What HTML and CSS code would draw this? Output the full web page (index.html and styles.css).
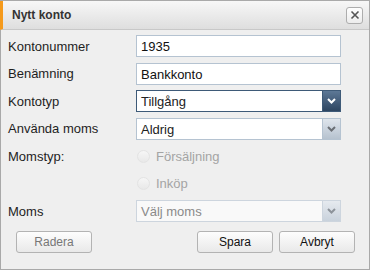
FILE: index.html
```html
<!DOCTYPE html>
<html lang="sv">
<head>
  <meta charset="UTF-8">
  <title>Nytt konto</title>
  <link rel="stylesheet" href="styles.css">
</head>
<body>

  <div class="dialog">
    <div class="header">
      <span class="title">Nytt konto</span>
      <button class="close">
        <svg width="10" height="10" viewBox="0 0 10 10"><path d="M1.5 1.5 L8.5 8.5 M8.5 1.5 L1.5 8.5" stroke="#555" stroke-width="1.6" fill="none"/></svg>
      </button>
    </div>

    <div class="form">
      <label class="label">Kontonummer</label>
      <div class="field"><input class="input" value="1935"></div>

      <label class="label">Benämning</label>
      <div class="field"><input class="input" value="Bankkonto"></div>

      <label class="label">Kontotyp</label>
      <div class="field">
        <div class="select focus">
          <span class="value">Tillgång</span>
          <span class="arrow"><svg width="9" height="6" viewBox="0 0 9 6"><path d="M1 1 L4.5 4.5 L8 1" stroke="#fff" stroke-width="2" fill="none"/></svg></span>
        </div>
      </div>

      <label class="label">Använda moms</label>
      <div class="field">
        <div class="select">
          <span class="value">Aldrig</span>
          <span class="arrow"><svg width="9" height="6" viewBox="0 0 9 6"><path d="M1 1 L4.5 4.5 L8 1" stroke="#6b6f75" stroke-width="2" fill="none"/></svg></span>
        </div>
      </div>

      <label class="label">Momstyp:</label>
      <div class="field radio"><span class="dot"></span>Försäljning</div>

      <span></span>
      <div class="field radio"><span class="dot"></span>Inköp</div>

      <label class="label">Moms</label>
      <div class="field">
        <div class="select disabled">
          <span class="value">Välj moms</span>
          <span class="arrow"><svg width="9" height="6" viewBox="0 0 9 6"><path d="M1 1 L4.5 4.5 L8 1" stroke="#8d939a" stroke-width="2" fill="none"/></svg></span>
        </div>
      </div>
    </div>

    <div class="footer">
      <button class="btn muted">Radera</button>
      <div class="spacer"></div>
      <button class="btn">Spara</button>
      <button class="btn">Avbryt</button>
    </div>
  </div>

</body>
</html>
```

FILE: styles.css
```css
body {
  margin: 0;
  background: #fff;
  font-family: 'Liberation Sans', Arial, sans-serif;
  color: #222;
}

.dialog {
  width: 370px;
  height: 270px;
  box-sizing: border-box;
  border: 1px solid #a9a9a9;
  border-left: none;
  background: #efefef;
  display: flex;
  flex-direction: column;
}

.header {
  height: 29px;
  box-sizing: border-box;
  border-left: 3px solid #f59a1c;
  border-bottom: 1px solid #c8c8c8;
  background: linear-gradient(#f7f7f7, #dedede);
  display: flex;
  align-items: center;
  padding: 0 6px 0 9px;
}

.title {
  flex: 1;
  font-weight: bold;
  font-size: 12px;
  color: #333;
}

.close {
  width: 17px;
  height: 17px;
  padding: 0;
  border: 1px solid #adadad;
  border-radius: 3px;
  background: linear-gradient(#fefefe, #ececec);
  display: flex;
  align-items: center;
  justify-content: center;
}

.form {
  border-left: 1px solid #a9a9a9;
  display: grid;
  grid-template-columns: 128px 205px;
  grid-auto-rows: 22px;
  row-gap: 5.5px;
  padding: 5px 0 0 7px;
  align-items: center;
}

.label {
  font-size: 13px;
  color: #1e1e1e;
}

.field {
  height: 22px;
  display: flex;
  align-items: center;
}

.input {
  width: 100%;
  height: 22px;
  box-sizing: border-box;
  border: 1px solid #b5c3d1;
  background: #fff;
  font-family: inherit;
  font-size: 13px;
  color: #111;
  padding: 1px 4px 0;
  outline: none;
}

.select {
  width: 100%;
  height: 22px;
  box-sizing: border-box;
  border: 1px solid #b5c3d1;
  background: #fff;
  display: flex;
  align-items: center;
}

.select .value {
  flex: 1;
  font-size: 13px;
  padding: 1px 4px 0;
}

.select .arrow {
  width: 17px;
  height: 100%;
  border-left: 1px solid #b5c3d1;
  background: linear-gradient(#dfe5ec, #b6c2cf);
  display: flex;
  align-items: center;
  justify-content: center;
}

.select.focus {
  border-color: #3e5a78;
}

.select.focus .arrow {
  border-left-color: #3e5a78;
  background: linear-gradient(#5d7896, #2d4561);
}

.select.disabled {
  background: #f9f9f9;
  border-color: #cdd5de;
}

.select.disabled .value {
  color: #8a8a8a;
}

.select.disabled .arrow {
  border-left-color: #cdd5de;
  background: linear-gradient(#e6eaef, #c9d2dc);
}

.radio {
  font-size: 13px;
  color: #a4a4a4;
  gap: 6px;
}

.dot {
  width: 11px;
  height: 11px;
  border-radius: 50%;
  border: 1px solid #e3e3e3;
  background: linear-gradient(#f6f6f6, #e8e8e8);
  margin-left: 1px;
}

.footer {
  flex: 1;
  border-left: 1px solid #a9a9a9;
  display: flex;
  align-items: flex-start;
  gap: 6px;
  padding: 9px 14px 0 15px;
}

.spacer {
  flex: 1;
}

.btn {
  width: 76px;
  height: 22px;
  border: 1px solid #b3b3b3;
  border-radius: 3px;
  background: linear-gradient(#fdfdfd, #e9e9e9);
  font-family: inherit;
  font-size: 12px;
  color: #111;
  padding: 0;
}

.btn.muted {
  color: #777;
}
```
